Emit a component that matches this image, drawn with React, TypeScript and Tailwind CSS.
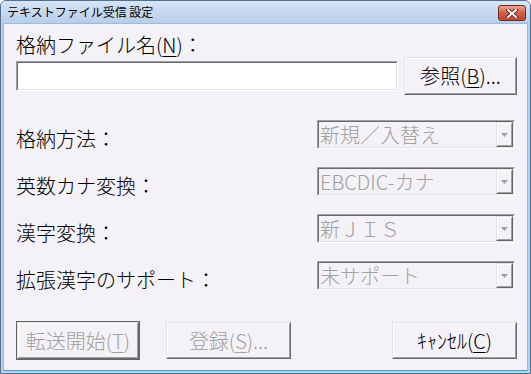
import type { ReactNode } from 'react';

const raised =
  'border border-t-[#e3e3e3] border-l-[#e3e3e3] border-b-[#696969] border-r-[#696969]';
const raisedInner =
  'border border-t-white border-l-white border-b-[#a0a0a0] border-r-[#a0a0a0]';
const sunken =
  'border border-t-[#a0a0a0] border-l-[#a0a0a0] border-b-white border-r-white';
const sunkenInner =
  'border border-t-[#696969] border-l-[#696969] border-b-[#e3e3e3] border-r-[#e3e3e3]';

function Mn({ children }: { children: ReactNode }) {
  return <span className="underline underline-offset-[3px] decoration-1">{children}</span>;
}

function Button({
  children,
  disabled,
  isDefault,
  className = '',
}: {
  children: ReactNode;
  disabled?: boolean;
  isDefault?: boolean;
  className?: string;
}) {
  const face = (
    <div className={`${raised} h-full w-full`}>
      <div
        className={`${raisedInner} h-full w-full flex items-center justify-center bg-[#f4f2f6] ${
          disabled ? 'text-[#a0a0a0]' : 'text-black'
        }`}
      >
        {children}
      </div>
    </div>
  );
  if (isDefault) {
    return <div className={`border border-[#646464] ${className}`}>{face}</div>;
  }
  return <div className={className}>{face}</div>;
}

function Select({ value }: { value: string }) {
  return (
    <div className={`${sunken} w-[198px] h-[29px] mr-[2px]`}>
      <div className={`${sunkenInner} h-full flex items-stretch bg-[#f4f2f6]`}>
        <div className="flex-1 flex items-center pl-[1px] text-[#a0a0a0] leading-[20px] whitespace-pre">
          {value}
        </div>
        <div className={`${raised} w-[17px]`}>
          <div className={`${raisedInner} h-full flex items-center justify-center bg-[#f4f2f6]`}>
            <svg width="7" height="4" viewBox="0 0 7 4">
              <path d="M0 0h7L3.5 4z" fill="#a0a0a0" />
            </svg>
          </div>
        </div>
      </div>
    </div>
  );
}

function Row({ label, value }: { label: string; value: string }) {
  return (
    <div className="flex justify-between h-[29px]">
      <div className="pt-[9px] leading-[20px]">{label}</div>
      <Select value={value} />
    </div>
  );
}

export default function App() {
  return (
    <div className="w-[531px] h-[374px] flex flex-col overflow-hidden rounded-t-[6px] border border-[#54708f] bg-[#b8cfeb] font-['Noto_Sans_CJK_JP','Noto_Sans',sans-serif] font-light text-black">
      <div className="h-[22px] shrink-0 flex items-start justify-between pl-[6px] pr-[4px] bg-gradient-to-b from-[#d6e4f5] to-[#b7cee9]">
        <div className="text-[12px] leading-[22px] font-normal">テキストファイル受信 設定</div>
        <div className="mt-[4px] w-[28px] h-[16px] rounded-[3px] border border-[#6e2a20] bg-gradient-to-b from-[#eba595] via-[#cf5e48] to-[#c04832] flex items-center justify-center">
          <svg width="12" height="9" viewBox="0 0 12 9">
            <path
              d="M2 1l8 7M10 1L2 8"
              stroke="#5a1c14"
              strokeWidth="3.6"
              strokeLinecap="square"
            />
            <path d="M2 1l8 7M10 1L2 8" stroke="#ffffff" strokeWidth="2" strokeLinecap="square" />
          </svg>
        </div>
      </div>

      <div className="flex-1 mx-[2px] mb-[2px] flex flex-col bg-[#f4f2f6] border border-[#9fbadb] border-b-[#3d9dd8] pl-[12px] pr-[10px] pt-[11px] text-[20px]">
        <div className="leading-[20px] h-[20px]">
          格納ファイル名(<Mn>N</Mn>)：
        </div>
        <div className="mt-[2px] flex items-center justify-between h-[38px]">
          <div className={`${sunken} w-[382px] h-[30px]`}>
            <div className={`${sunkenInner} h-full bg-white`} />
          </div>
          <Button className="w-[113px] h-[38px]">
            <span className="leading-[20px]">
              参照(<Mn>B</Mn>)...
            </span>
          </Button>
        </div>

        <div className="mt-[25px] flex flex-col gap-[18px]">
          <Row label="格納方法：" value="新規／入替え" />
          <Row label="英数カナ変換：" value="EBCDIC-カナ" />
          <Row label="漢字変換：" value="新ＪＩＳ" />
          <Row label="拡張漢字のサポート：" value="未サポート" />
        </div>

        <div className="mt-[31px] flex items-center h-[39px]">
          <Button isDefault disabled className="w-[124px] h-[39px]">
            <span className="leading-[20px]">
              転送開始(<Mn>T</Mn>)
            </span>
          </Button>
          <Button disabled className="ml-[26px] w-[125px] h-[37px]">
            <span className="leading-[20px]">
              登録(<Mn>S</Mn>)...
            </span>
          </Button>
          <Button className="ml-auto w-[125px] h-[37px]">
            <span className="leading-[20px]">
              ｷｬﾝｾﾙ(<Mn>C</Mn>)
            </span>
          </Button>
        </div>
      </div>
    </div>
  );
}
